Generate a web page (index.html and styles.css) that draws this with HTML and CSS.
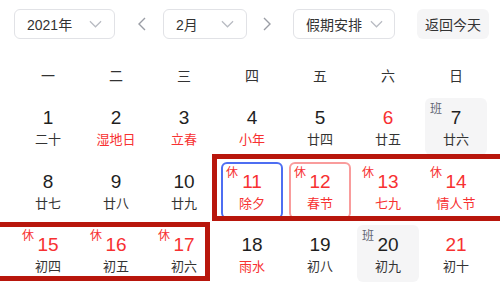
FILE: index.html
```html
<!DOCTYPE html>
<html lang="zh">
<head>
<meta charset="utf-8">
<link rel="stylesheet" href="styles.css">
</head>
<body>
<div class="page">
  <div class="toolbar">
    <div class="select sel-year"><span>2021年</span><svg class="chev" viewBox="0 0 14 8"><path d="M1 1 L7 7 L13 1"/></svg></div>
    <svg class="arrow arrow-prev" viewBox="0 0 8 14"><path d="M7 1 L1 7 L7 13"/></svg>
    <div class="select sel-month"><span>2月</span><svg class="chev" viewBox="0 0 14 8"><path d="M1 1 L7 7 L13 1"/></svg></div>
    <svg class="arrow arrow-next" viewBox="0 0 8 14"><path d="M1 1 L7 7 L1 13"/></svg>
    <div class="select sel-holiday"><span>假期安排</span><svg class="chev" viewBox="0 0 14 8"><path d="M1 1 L7 7 L13 1"/></svg></div>
    <div class="today-btn">返回今天</div>
  </div>

  <div class="weekdays">
    <span>一</span><span>二</span><span>三</span><span>四</span><span>五</span><span>六</span><span>日</span>
  </div>

  <div class="grid">
    <div class="cell"><div class="num">1</div><div class="lunar">二十</div></div>
    <div class="cell"><div class="num">2</div><div class="lunar red">湿地日</div></div>
    <div class="cell"><div class="num">3</div><div class="lunar red">立春</div></div>
    <div class="cell"><div class="num">4</div><div class="lunar red">小年</div></div>
    <div class="cell"><div class="num">5</div><div class="lunar">廿四</div></div>
    <div class="cell"><div class="num red">6</div><div class="lunar">廿五</div></div>
    <div class="cell work"><span class="tag tag-work">班</span><div class="num">7</div><div class="lunar">廿六</div></div>

    <div class="cell"><div class="num">8</div><div class="lunar">廿七</div></div>
    <div class="cell"><div class="num">9</div><div class="lunar">廿八</div></div>
    <div class="cell"><div class="num">10</div><div class="lunar">廿九</div></div>
    <div class="cell today"><span class="tag tag-rest">休</span><div class="num red">11</div><div class="lunar red">除夕</div></div>
    <div class="cell selected"><span class="tag tag-rest">休</span><div class="num red">12</div><div class="lunar red">春节</div></div>
    <div class="cell"><span class="tag tag-rest">休</span><div class="num red">13</div><div class="lunar red">七九</div></div>
    <div class="cell"><span class="tag tag-rest">休</span><div class="num red">14</div><div class="lunar red">情人节</div></div>

    <div class="cell"><span class="tag tag-rest">休</span><div class="num red">15</div><div class="lunar">初四</div></div>
    <div class="cell"><span class="tag tag-rest">休</span><div class="num red">16</div><div class="lunar">初五</div></div>
    <div class="cell"><span class="tag tag-rest">休</span><div class="num red">17</div><div class="lunar">初六</div></div>
    <div class="cell"><div class="num">18</div><div class="lunar red">雨水</div></div>
    <div class="cell"><div class="num">19</div><div class="lunar">初八</div></div>
    <div class="cell work"><span class="tag tag-work">班</span><div class="num">20</div><div class="lunar">初九</div></div>
    <div class="cell"><div class="num red">21</div><div class="lunar">初十</div></div>
  </div>

  <div class="mark mark-row2"></div>
  <div class="mark mark-row3"></div>
</div>
</body>
</html>
```

FILE: styles.css
```css
* { box-sizing: border-box; }

html, body {
  margin: 0;
  padding: 0;
  background: #fff;
}

body {
  font-family: "Liberation Sans", Arial, "Noto Sans CJK SC", sans-serif;
  color: #222;
  overflow: hidden;
}

.page {
  position: relative;
  width: 500px;
  height: 285px;
}

.toolbar {
  display: flex;
  align-items: center;
  padding-top: 9px;
  height: 39px;
}

.select {
  display: flex;
  align-items: center;
  justify-content: space-between;
  height: 30px;
  padding: 0 12px;
  border: 1px solid #e1e2e6;
  border-radius: 6px;
  font-size: 14px;
  color: #333;
}

.sel-year { margin-left: 14px; width: 101px; }
.sel-month { margin-left: 17px; width: 84px; }
.sel-holiday { margin-left: 22px; width: 102px; padding-right: 11px; }

.chev {
  width: 13px;
  height: 8px;
  fill: none;
  stroke: #b8bbc2;
  stroke-width: 1.3;
}

.arrow {
  width: 8px;
  height: 14px;
  fill: none;
  stroke: #9a9da5;
  stroke-width: 1.4;
}

.arrow-prev { margin-left: 23px; }
.arrow-next { margin-left: 16px; }

.today-btn {
  margin-left: 22px;
  width: 72px;
  height: 30px;
  border-radius: 6px;
  background: #f5f5f6;
  font-size: 14px;
  color: #333;
  display: flex;
  align-items: center;
  justify-content: center;
}

.weekdays {
  display: grid;
  grid-template-columns: repeat(7, 62px);
  column-gap: 6px;
  margin: 18px 0 0 17px;
  height: 36px;
  align-items: center;
  font-size: 14px;
  color: #333;
}

.weekdays span { text-align: center; }

.grid {
  display: grid;
  grid-template-columns: repeat(7, 62px);
  grid-auto-rows: 57px;
  column-gap: 6px;
  row-gap: 6.5px;
  margin: 5px 0 0 17px;
}

.cell {
  position: relative;
  border-radius: 6px;
  padding-top: 9px;
  text-align: center;
}

.cell.work { background: #f5f5f6; }

.cell.today { border: 2px solid #4e6ef2; padding-top: 7px; }
.cell.selected { border: 2px solid #f99c9c; padding-top: 7px; }

.num {
  font-size: 19px;
  line-height: 22px;
  color: #1f1f1f;
}

.lunar {
  margin-top: 1px;
  font-size: 13px;
  line-height: 18px;
  color: #333;
  font-family: "Noto Sans CJK SC", sans-serif;
}

.red { color: #f73131; }
.lunar.red { color: #f73131; }

.tag {
  position: absolute;
  top: 3px;
  left: 5px;
  font-size: 12px;
  line-height: 14px;
  font-family: "Noto Sans CJK SC", sans-serif;
}

.cell.today .tag, .cell.selected .tag { top: 1px; left: 3px; }

.tag-rest { color: #f73131; }
.tag-work { color: #626675; }

.mark {
  position: absolute;
  border: 5px solid #b8160c;
}

.mark-row2 {
  left: 212px;
  top: 154px;
  width: 300px;
  height: 67px;
}

.mark-row3 {
  left: -10px;
  top: 221.5px;
  width: 220px;
  height: 59.5px;
}
```
